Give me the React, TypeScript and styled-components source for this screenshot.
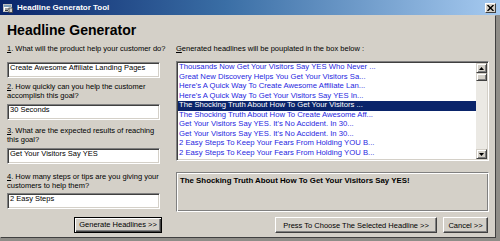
import React from "react";
import styled, { createGlobalStyle } from "styled-components";

const GlobalStyle = createGlobalStyle`
  html, body { margin: 0; padding: 0; background: #d4d0c8; }
  body { font-family: "Liberation Sans", Arial, sans-serif; color: #000; }
  * { box-sizing: border-box; }
`;

const Window = styled.div`
  width: 500px;
  height: 241px;
  background: #8f8d88;
  display: flex;
  flex-direction: column;
  overflow: hidden;
`;

const TitleBar = styled.div`
  flex: none;
  height: 15px;
  background: linear-gradient(to right, #0a246a 0%, #3a6ea5 45%, #a6caf0 100%);
  display: flex;
  align-items: center;
  padding: 0 4px 0 3px;
  gap: 4px;
`;

const TitleText = styled.span`
  flex: 1;
  color: #fff;
  font-weight: bold;
  font-size: 8px;
  line-height: 10px;
`;

const CloseButton = styled.div`
  width: 11px;
  height: 10px;
  background: #d4d0c8;
  border: 1px solid;
  border-color: #fff #404040 #404040 #fff;
  display: flex;
  align-items: center;
  justify-content: center;
`;

const Body = styled.div`
  flex: 1;
  background: #d4d0c8;
  margin: 0 5px 4px 0;
  box-shadow: 1px 1px 0 #404040;
  padding: 7px 0 0 7px;
  display: flex;
  flex-direction: column;
`;

const Heading = styled.h1`
  margin: 0;
  font-size: 14px;
  line-height: 16px;
  font-weight: bold;
`;

const Columns = styled.div`
  display: flex;
  gap: 14px;
  margin-top: 7px;
`;

const LeftCol = styled.div`
  width: 155px;
  display: flex;
  flex-direction: column;
`;

const RightCol = styled.div`
  width: 313px;
  display: flex;
  flex-direction: column;
`;

const Field = styled.div<{ $top: number; $gap: number }>`
  display: flex;
  flex-direction: column;
  margin-top: ${(p) => p.$top}px;
  gap: ${(p) => p.$gap}px;
`;

const Label = styled.div`
  font-size: 7.5px;
  line-height: 8.5px;
  white-space: nowrap;
`;

const TextBox = styled.div`
  width: 153px;
  height: 16px;
  background: #fff;
  border: 1px solid;
  border-color: #808080 #fff #fff #808080;
  box-shadow: inset 1px 1px #404040, inset -1px -1px #d4d0c8;
  padding: 1px 2px 0;
  font-size: 7.5px;
  line-height: 7px;
  white-space: nowrap;
  overflow: hidden;
`;

const Button = styled.div<{ $width: number; $default?: boolean }>`
  width: ${(p) => p.$width}px;
  height: 16px;
  background: #d4d0c8;
  font-size: 7.5px;
  display: flex;
  align-items: center;
  justify-content: center;
  white-space: nowrap;
  border: 1px solid;
  border-color: ${(p) => (p.$default ? "#000" : "#fff #404040 #404040 #fff")};
  box-shadow: ${(p) =>
    p.$default
      ? "inset 1px 1px #fff, inset -1px -1px #404040, inset -2px -2px #808080"
      : "inset -1px -1px #808080"};
`;

const LeftActions = styled.div`
  display: flex;
  justify-content: flex-end;
  margin-top: 8px;
`;

const ListBox = styled.div`
  margin-top: 7.5px;
  height: 100px;
  display: flex;
  background: #fff;
  border: 1px solid;
  border-color: #808080 #fff #fff #808080;
  box-shadow: inset 1px 1px #404040, inset -1px -1px #d4d0c8;
  padding: 1px;
`;

const Rows = styled.div`
  flex: 1;
  display: flex;
  flex-direction: column;
  overflow: hidden;
`;

const Row = styled.div<{ $selected?: boolean }>`
  height: 9.5px;
  flex: none;
  line-height: 7.5px;
  font-size: 7.7px;
  padding-left: 1px;
  white-space: nowrap;
  color: ${(p) => (p.$selected ? "#fff" : "#1f1fe0")};
  background: ${(p) => (p.$selected ? "#0a246a" : "transparent")};
`;

const ScrollBar = styled.div`
  width: 11px;
  display: flex;
  flex-direction: column;
  background: #ebe9e4;
`;

const ScrollPart = styled.div<{ $h: number }>`
  height: ${(p) => p.$h}px;
  flex: none;
  background: #d4d0c8;
  border: 1px solid;
  border-color: #d4d0c8 #404040 #404040 #d4d0c8;
  box-shadow: inset 1px 1px #fff, inset -1px -1px #808080;
  display: flex;
  align-items: center;
  justify-content: center;
`;

const Track = styled.div`
  flex: 1;
`;

const InfoBox = styled.div`
  margin-top: 11px;
  height: 40px;
  border: 1px solid;
  border-color: #808080 #fff #fff #808080;
  box-shadow: inset 1px 1px #fff, inset -1px -1px #808080;
  padding: 4.3px 3px 0;
  font-size: 7.85px;
  line-height: 8px;
  font-weight: bold;
  white-space: nowrap;
`;

const ButtonRow = styled.div`
  margin-top: 5px;
  display: flex;
  justify-content: flex-end;
  gap: 6px;
  padding-right: 1px;
`;

const AppIcon = () => (
  <svg width="10" height="10" viewBox="0 0 10 10">
    <rect x="0.5" y="1.5" width="8" height="7" fill="#fff" stroke="#c0c0c0" />
    <rect x="1" y="2" width="7" height="2" fill="#7f9db9" />
    <path d="M2 6 L6 6 M2 7.5 L5 7.5" stroke="#404040" strokeWidth="1" />
    <rect x="6" y="5" width="3.5" height="4.5" fill="#d4d0c8" stroke="#404040" strokeWidth="0.8" />
  </svg>
);

const CloseIcon = () => (
  <svg width="7" height="6" viewBox="0 0 7 6">
    <path d="M0.5 0 L6.5 6 M6.5 0 L0.5 6" stroke="#000" strokeWidth="1.4" />
  </svg>
);

const Arrow = ({ down }: { down?: boolean }) => (
  <svg width="5" height="3" viewBox="0 0 5 3">
    <path d={down ? "M0 0 L5 0 L2.5 3 Z" : "M0 3 L5 3 L2.5 0 Z"} fill="#000" />
  </svg>
);

const headlines = [
  "Thousands Now Get Your Visitors Say YES Who Never ...",
  "Great New Discovery Helps You Get Your Visitors Sa...",
  "Here's A Quick Way To Create Awesome Affiliate Lan...",
  "Here's A Quick Way To Get Your Visitors Say YES In...",
  "The Shocking Truth About How To Get Your Visitors ...",
  "The Shocking Truth About How To Create Awesome Aff...",
  "Get Your Visitors Say YES. It's No Accident. In 30...",
  "Get Your Visitors Say YES. It's No Accident. In 30...",
  "2 Easy Steps To Keep Your Fears From Holding YOU B...",
  "2 Easy Steps To Keep Your Fears From Holding YOU B...",
];

const fields = [
  { n: "1", text: ["What will the product help your customer do?"], value: "Create Awesome Affiliate Landing Pages", top: 0, gap: 8.5 },
  { n: "2", text: ["How quickly can you help the customer", "accomplish this goal?"], value: "30 Seconds", top: 5.3, gap: 3.7 },
  { n: "3", text: ["What are the expected results of reaching", "this goal?"], value: "Get Your Visitors Say YES", top: 7.3, gap: 3.7 },
  { n: "4", text: ["How many steps or tips are you giving your", "customers to help them?"], value: "2 Easy Steps", top: 9.3, gap: 2.7 },
];

export default function App() {
  return (
    <>
      <GlobalStyle />
      <Window>
        <TitleBar>
          <AppIcon />
          <TitleText>Headline Generator Tool</TitleText>
          <CloseButton>
            <CloseIcon />
          </CloseButton>
        </TitleBar>
        <Body>
          <Heading>Headline Generator</Heading>
          <Columns>
            <LeftCol>
              {fields.map((f) => (
                <Field key={f.n} $top={f.top} $gap={f.gap}>
                  <Label>
                    <u>{f.n}</u>. {f.text[0]}
                    {f.text[1] && (
                      <>
                        <br />
                        {f.text[1]}
                      </>
                    )}
                  </Label>
                  <TextBox>{f.value}</TextBox>
                </Field>
              ))}
              <LeftActions>
                <Button $width={88} $default>
                  Generate Headlines &gt;&gt;
                </Button>
              </LeftActions>
            </LeftCol>
            <RightCol>
              <Label>
                <u>G</u>enerated headlines will be pouplated in the box below :
              </Label>
              <ListBox>
                <Rows>
                  {headlines.map((h, i) => (
                    <Row key={i} $selected={i === 4}>
                      {h}
                    </Row>
                  ))}
                </Rows>
                <ScrollBar>
                  <ScrollPart $h={10}>
                    <Arrow />
                  </ScrollPart>
                  <ScrollPart $h={8} />
                  <Track />
                  <ScrollPart $h={10}>
                    <Arrow down />
                  </ScrollPart>
                </ScrollBar>
              </ListBox>
              <InfoBox>The Shocking Truth About How To Get Your Visitors Say YES!</InfoBox>
              <ButtonRow>
                <Button $width={162}>Press To Choose The Selected Headline &gt;&gt;</Button>
                <Button $width={45}>Cancel &gt;&gt;</Button>
              </ButtonRow>
            </RightCol>
          </Columns>
        </Body>
      </Window>
    </>
  );
}
